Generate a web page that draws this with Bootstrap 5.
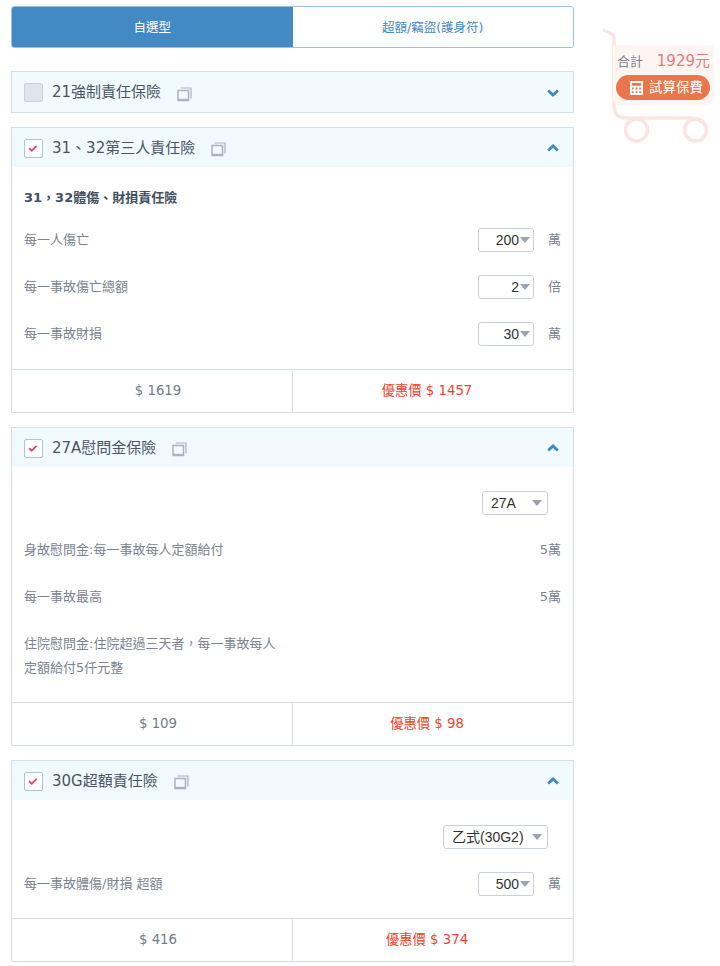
<!DOCTYPE html>
<html lang="zh-Hant">
<head>
<meta charset="utf-8">
<title>試算</title>
<link href="https://cdn.jsdelivr.net/npm/bootstrap@5.3.0/dist/css/bootstrap.min.css" rel="stylesheet">
<style>
html,body{overflow:hidden;height:966px}
body{font-family:"DejaVu Sans","Noto Sans CJK SC",sans-serif;font-size:13px;color:#7b8490;background:#fff}
.pagewrap{width:563px;margin-left:11px;padding-top:6px}
.tabbar{height:42px;border:1px solid #9dc2e0;border-radius:3px;overflow:hidden;margin-bottom:23px}
.tabitem{flex:1 1 0;font-size:12.500px;color:#4389c3;background:#fff;padding-top:2px}
.tabitem.on{background:#4389c3;color:#fff}
.planbox{border:1px solid #d6e0ea;margin-bottom:14px;background:#fff;border-radius:0}
.planhead{height:39px;background:#f0faff;padding:1px 12px 0;font-size:15px;color:#4b5563}
.planhead.solo{height:40px}
.tick{width:19px;height:19px;border:1px solid #a9c4dd;border-radius:2px;background:#fff;margin-right:9px;flex:none}
.tick.off{background:#dde5ee;border-color:#c9d3de}
.copyic{margin-left:16px;flex:none;margin-top:3px}
.chev{margin-left:auto;margin-right:2px}
.planbody{padding:0 12px 12px}
.planbody.lastplan{padding-bottom:11px}
.subhead{font-weight:700;color:#454f5e;height:49px;padding-top:12px;font-size:13px}
.datarow{height:47px}
.firstrow{margin-top:12px}
.lastplan .firstrow{margin-top:13px}
.selbox{font-family:"Liberation Sans","Noto Sans CJK SC",sans-serif;font-size:14px;color:#333;height:24px;border:1px solid #c9d0da;border-radius:3px;padding:0 14px 0 4px;line-height:22px;background-color:#fff;background-image:url("data:image/svg+xml,%3Csvg xmlns='http://www.w3.org/2000/svg' width='10' height='6'%3E%3Cpath d='M0 0h10L5 6z' fill='%239aa3b2'/%3E%3C/svg%3E");background-repeat:no-repeat;background-position:right 3px center;background-size:10px 6px;appearance:none;-webkit-appearance:none;text-align:right;text-align-last:right;width:56px;outline:0}
.selwide{text-align:left;text-align-last:left;padding:0 8px;background-position:right 5px center;width:66px;margin-right:13px}
.selgrp{width:105px}
.unit{width:27px;text-align:right;color:#7b8490;font-size:13px;flex:none}
.planfoot{height:43px;border-top:1px solid #d6e0ea}
.footcell{flex:1 1 0;color:#747d88;font-size:13.300px;padding-left:12px}
.footcell+.footcell{border-left:1px solid #d6e0ea;color:#f0452b;padding-left:0;padding-right:12px}
.cartwrap{position:absolute;left:600px;top:26px;width:120px;height:120px}
.cartsum{position:absolute;left:17px;top:24px;width:93px;font-size:13px;color:#7b8490}
.cartsum b{font-weight:400;font-size:15px;color:#e87a78}
.cartbtn{position:absolute;left:16px;top:49px;width:94px;height:25px;border-radius:13px;background:#e8774c;color:#fff;font-size:13.500px;gap:6px;padding-left:7px}
.multi{line-height:24px;padding-top:12px;height:70px}
</style>
</head>
<body>
<svg width="0" height="0" class="position-absolute">
  <symbol id="copyi" viewBox="0 0 15 15"><path d="M3.500 1h10.500v10.500" fill="none" stroke="#aab2be" stroke-width="1.200"/><rect x="1" y="3.500" width="10.500" height="10" fill="none" stroke="#aab2be" stroke-width="1.500"/><path d="M1 12.800h10.500" stroke="#aab2be" stroke-width="2"/></symbol>
  <symbol id="tk" viewBox="0 0 19 19"><path d="M4.500 9.300l3 2.700 5.500-5.500" fill="none" stroke="#e0486f" stroke-width="2.100"/></symbol>
  <symbol id="up" viewBox="0 0 12 8"><path d="M1.200 6.500L6 2l4.800 4.500" fill="none" stroke="#3d88c6" stroke-width="2.800"/></symbol>
  <symbol id="dn" viewBox="0 0 12 8"><path d="M1.200 1.500L6 6l4.800-4.500" fill="none" stroke="#3d88c6" stroke-width="2.800"/></symbol>
</svg>
<div class="pagewrap">
  <div class="tabbar d-flex">
    <div class="tabitem on d-flex align-items-center justify-content-center">自選型</div>
    <div class="tabitem d-flex align-items-center justify-content-center">超額/竊盜(護身符)</div>
  </div>

  <div class="planbox">
    <div class="planhead solo d-flex align-items-center">
      <span class="tick off"></span><span>21強制責任保險</span>
      <svg class="copyic" width="15" height="15"><use href="#copyi"/></svg>
      <svg class="chev" width="12" height="8"><use href="#dn"/></svg>
    </div>
  </div>

  <div class="planbox">
    <div class="planhead d-flex align-items-center">
      <svg class="tick" viewBox="0 0 19 19"><use href="#tk"/></svg><span>31、32第三人責任險</span>
      <svg class="copyic" width="15" height="15"><use href="#copyi"/></svg>
      <svg class="chev" width="12" height="8"><use href="#up"/></svg>
    </div>
    <div class="planbody">
      <div class="subhead d-flex align-items-center">31，32體傷、財損責任險</div>
      <div class="datarow d-flex align-items-center justify-content-between"><span>每一人傷亡</span><span class="d-flex align-items-center"><select class="selbox"><option>200</option></select><span class="unit">萬</span></span></div>
      <div class="datarow d-flex align-items-center justify-content-between"><span>每一事故傷亡總額</span><span class="d-flex align-items-center"><select class="selbox"><option>2</option></select><span class="unit">倍</span></span></div>
      <div class="datarow d-flex align-items-center justify-content-between"><span>每一事故財損</span><span class="d-flex align-items-center"><select class="selbox"><option>30</option></select><span class="unit">萬</span></span></div>
    </div>
    <div class="planfoot d-flex">
      <div class="footcell d-flex align-items-center justify-content-center">$ 1619</div>
      <div class="footcell d-flex align-items-center justify-content-center">優惠價 $ 1457</div>
    </div>
  </div>

  <div class="planbox">
    <div class="planhead d-flex align-items-center">
      <svg class="tick" viewBox="0 0 19 19"><use href="#tk"/></svg><span>27A慰問金保險</span>
      <svg class="copyic" width="15" height="15"><use href="#copyi"/></svg>
      <svg class="chev" width="12" height="8"><use href="#up"/></svg>
    </div>
    <div class="planbody">
      <div class="d-flex justify-content-end align-items-center datarow firstrow"><select class="selbox selwide"><option>27A</option></select></div>
      <div class="datarow d-flex align-items-center justify-content-between"><span>身故慰問金:每一事故每人定額給付</span><span>5萬</span></div>
      <div class="datarow d-flex align-items-center justify-content-between"><span>每一事故最高</span><span>5萬</span></div>
      <div class="multi">住院慰問金:住院超過三天者，每一事故每人<br>定額給付5仟元整</div>
    </div>
    <div class="planfoot d-flex">
      <div class="footcell d-flex align-items-center justify-content-center">$ 109</div>
      <div class="footcell d-flex align-items-center justify-content-center">優惠價 $ 98</div>
    </div>
  </div>

  <div class="planbox">
    <div class="planhead d-flex align-items-center">
      <svg class="tick" viewBox="0 0 19 19"><use href="#tk"/></svg><span>30G超額責任險</span>
      <svg class="copyic" width="15" height="15"><use href="#copyi"/></svg>
      <svg class="chev" width="12" height="8"><use href="#up"/></svg>
    </div>
    <div class="planbody lastplan">
      <div class="d-flex justify-content-end align-items-center datarow firstrow"><select class="selbox selwide selgrp"><option>乙式(30G2)</option></select></div>
      <div class="datarow d-flex align-items-center justify-content-between"><span>每一事故體傷/財損 超額</span><span class="d-flex align-items-center"><select class="selbox"><option>500</option></select><span class="unit">萬</span></span></div>
    </div>
    <div class="planfoot d-flex">
      <div class="footcell d-flex align-items-center justify-content-center">$ 416</div>
      <div class="footcell d-flex align-items-center justify-content-center">優惠價 $ 374</div>
    </div>
  </div>
</div>

<div class="cartwrap">
  <svg width="120" height="120" viewBox="0 0 120 120" class="position-absolute top-0 start-0">
    <g fill="none" stroke="#f9e6e2" stroke-width="3.500">
      <path d="M3 4l9 4q2 1 2 4v67q0 13 12 13h64q10 0 12 5"/>
      <circle cx="36.500" cy="104" r="11"/>
      <circle cx="95.500" cy="104" r="11"/>
    </g>
    <path d="M13 19h101v53q0 7-7 7H20q-7 0-7-7z" fill="#fef5f3"/>
  </svg>
  <div class="cartsum d-flex justify-content-between align-items-center"><span>合計</span><b>1929元</b></div>
  <div class="cartbtn d-flex align-items-center justify-content-center">
    <svg width="13" height="14" viewBox="0 0 14 15"><path fill="#fff" fill-rule="evenodd" d="M1 0h12a1 1 0 0 1 1 1v13a1 1 0 0 1-1 1H1a1 1 0 0 1-1-1V1a1 1 0 0 1 1-1zm1 2v3h10V2zm0 5v2h2V7zm4 0v2h2V7zm4 0v2h2V7zm-8 4v2h2v-2zm4 0v2h2v-2zm4 0v2h2v-2z"/></svg>
    <span>試算保費</span>
  </div>
</div>
<script src="https://cdn.jsdelivr.net/npm/bootstrap@5.3.0/dist/js/bootstrap.bundle.min.js"></script>
</body>
</html>
